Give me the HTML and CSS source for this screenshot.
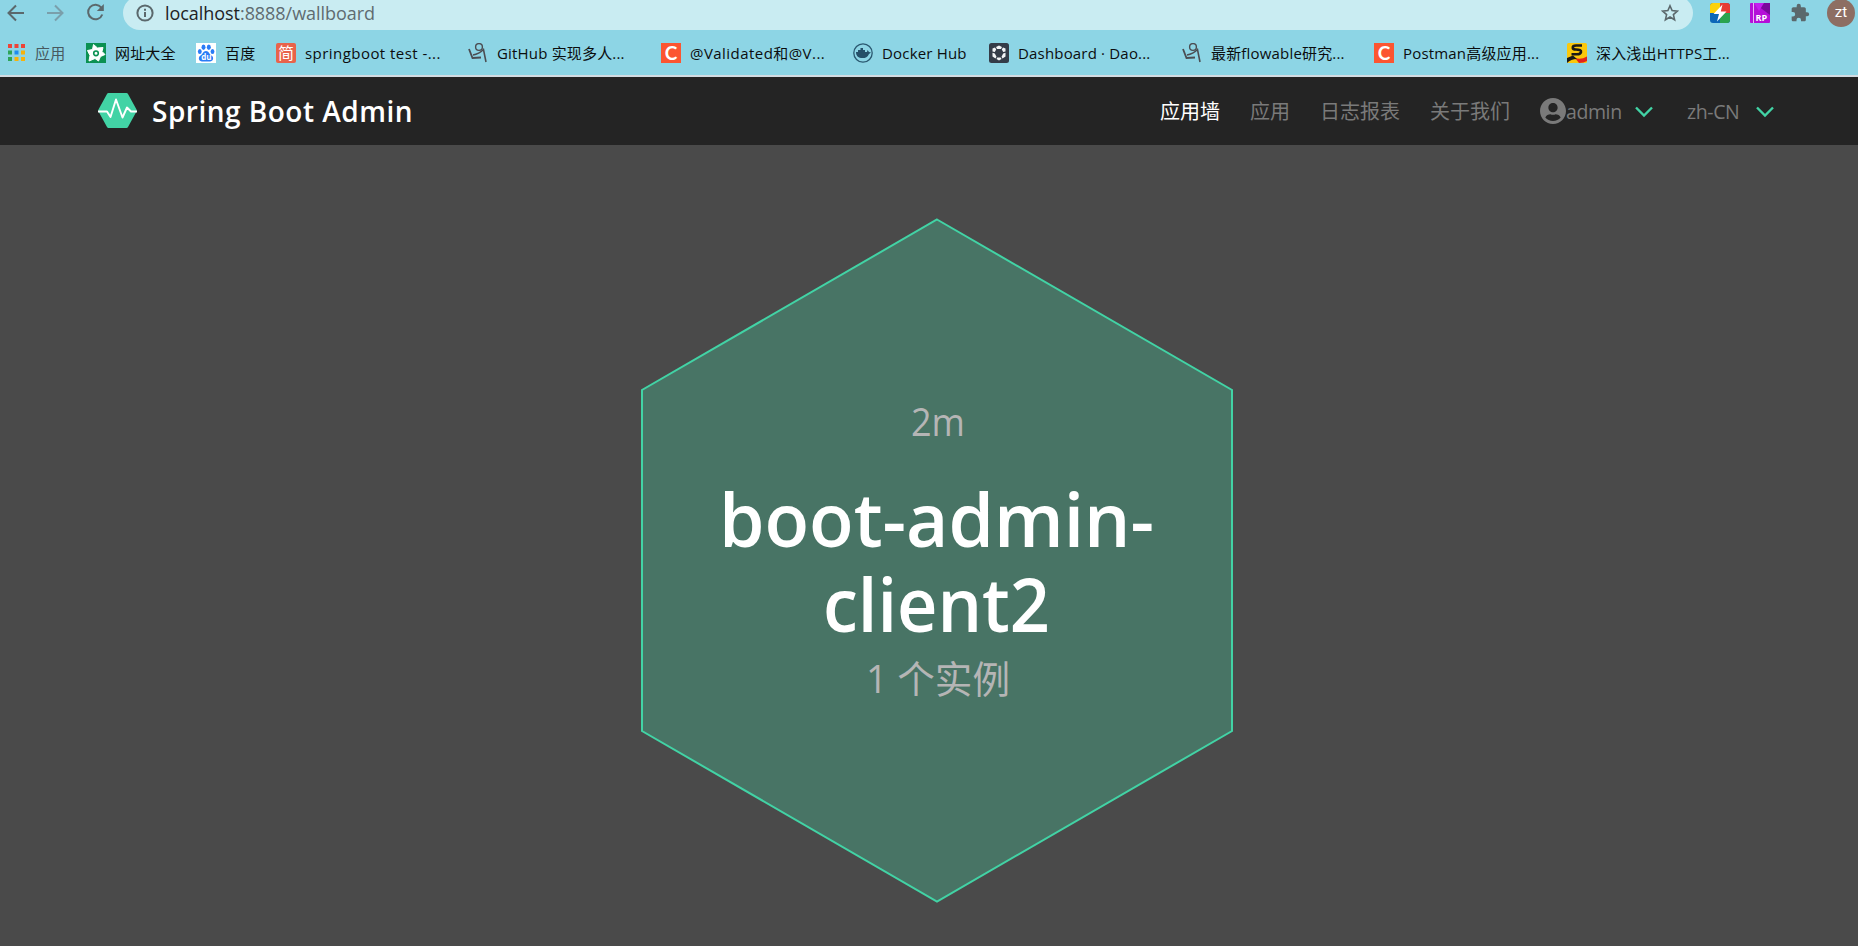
FILE: index.html
```
<!DOCTYPE html>
<html lang="zh-CN">
<head>
  <meta charset="UTF-8">
  <title>Spring Boot Admin</title>
  <link rel="stylesheet" href="styles.css">
</head>
<body>
  <div class="browser">
    <div class="toolbar">
      <div class="history">
        <svg class="back" width="18" height="18" viewBox="0 0 18 18"><path d="M17 9H2M9 1.500L1.500 9L9 16.500"/></svg>
        <svg class="forward" width="18" height="18" viewBox="0 0 18 18"><path d="M0 9H15M8 1.500L15.500 9L8 16.500"/></svg>
        <svg class="reload" width="19" height="19" viewBox="0 0 19 19"><path d="M15.300 4.600A7.300 7.300 0 1 0 16.300 11.500"/><path class="solid" d="M17.800 1V8H10.800Z"/></svg>
      </div>
      <div class="address">
        <svg class="info" width="18" height="18" viewBox="0 0 18 18"><circle cx="9" cy="9" r="7.600"/><path d="M9 8V13M9 4.800V6.800"/></svg>
        <span class="url"><b>localhost</b>:8888/wallboard</span>
        <svg class="star" width="18" height="18" viewBox="0 0 18 18"><path d="M9 1.800L11.100 6.600L16.300 7.100L12.400 10.600L13.600 15.800L9 13L4.400 15.800L5.600 10.600L1.700 7.100L6.900 6.600Z"/></svg>
      </div>
      <div class="extensions">
        <svg width="20" height="20" viewBox="0 0 20 20"><rect width="20" height="20" rx="3" fill="#0b67b8"/><path d="M3 0H10V10H0V3Q0 0 3 0Z" fill="#fbd20b"/><path d="M10 0H17Q20 0 20 3V10H10Z" fill="#e63b33"/><path d="M10 10H20V17Q20 20 17 20H10Z" fill="#2aa44f"/><path d="M12.500 1.500L3.500 11H9L7 18.500L16.500 8.500H10.800Z" fill="#fff"/></svg>
        <svg width="20" height="20" viewBox="0 0 20 20"><rect width="20" height="20" rx="1" fill="#b50fd8"/><path d="M4 0H20V12Z" fill="#7a0a9c"/><path d="M4 0H14L9 8Z" fill="#c51ff0"/><path d="M3.500 0V20" stroke="#e9b5f5"/><text class="rp" x="5.500" y="18">RP</text></svg>
        <svg class="puzzle" width="20" height="20" viewBox="0 0 24 24"><path d="M20.500 11H19V7c0-1.100-.9-2-2-2h-4V3.500a2.500 2.500 0 0 0-5 0V5H4c-1.100 0-2 .9-2 2v3.800h1.500a2.700 2.700 0 0 1 0 5.400H2V20c0 1.100.9 2 2 2h3.800v-1.500a2.700 2.700 0 0 1 5.400 0V22H17c1.100 0 2-.9 2-2v-4h1.500a2.500 2.500 0 0 0 0-5z"/></svg>
        <span class="avatar">zt</span>
      </div>
    </div>

    <div class="bookmarks">
      <div class="bookmark apps">
        <svg width="18" height="18" viewBox="0 0 18 18"><path fill="#ee4438" d="M0 0h4v4H0zM6.500 0h4v4h-4zM13 0h4v4h-4z"/><path fill="#2ea458" d="M0 6.500h4v4H0zM0 13h4v4H0z"/><path fill="#1f8cf0" d="M6.500 6.500h4v4h-4z"/><path fill="#f6b20c" d="M13 6.500h4v4h-4zM6.500 13h4v4h-4zM13 13h4v4h-4z"/></svg>
        <span>应用</span>
      </div>
      <div class="bookmark">
        <svg width="20" height="20" viewBox="0 0 20 20"><rect width="20" height="20" fill="#0b9152"/><path fill="#fff" stroke="#fff" stroke-linejoin="round" d="M7.500 1.500L11.500 5L17 4.500L16 8.500L19 11.500L14.500 13.500L12.500 18L9 15.500L3 18L4 12.500L1.500 7.500L6.500 6.500Z"/><circle cx="10" cy="10.300" r="2.300" fill="none" stroke="#0b9152" stroke-width="1.600"/></svg>
        <span>网址大全</span>
      </div>
      <div class="bookmark">
        <svg width="20" height="20" viewBox="0 0 20 20"><rect width="20" height="20" fill="#fff"/><g fill="#2a7cf6"><ellipse cx="7.500" cy="4.200" rx="2" ry="2.700"/><ellipse cx="12.800" cy="4.200" rx="2" ry="2.700"/><ellipse cx="3.800" cy="8.500" rx="1.900" ry="2.500"/><ellipse cx="16.500" cy="8.500" rx="1.900" ry="2.500"/><path d="M10 8C13 8 13 11 15.500 12.500C18.500 14.500 17 18.500 14 18.500H6C3 18.500 1.500 14.500 4.500 12.500C7 11 7 8 10 8Z"/></g><text class="du" x="5.200" y="17.200">du</text></svg>
        <span>百度</span>
      </div>
      <div class="bookmark spaced">
        <i class="tile jian">简</i>
        <span>springboot test -...</span>
      </div>
      <div class="bookmark">
        <svg width="20" height="20" viewBox="0 0 20 20" fill="none" stroke="#4b4d52"><circle cx="11" cy="4" r="3.400" stroke-width="1.400"/><path stroke-width="1.800" d="M1 6L4.500 15L13 14.500"/><path stroke-width="1.600" d="M5 12Q11 11 15.500 6.500L18 19"/></svg>
        <span>GitHub 实现多人...</span>
      </div>
      <div class="bookmark spaced">
        <i class="tile csdn">C</i>
        <span>@Validated和@V...</span>
      </div>
      <div class="bookmark">
        <svg width="20" height="20" viewBox="0 0 20 20"><circle cx="10" cy="10" r="9.200" fill="none" stroke="#2a5870" stroke-width="1.300"/><path fill="#254f68" d="M3 9H5V7H7.500V5H10V7H12V9H14L14.500 7L16 9L18 9.500L16 11C14.500 14.500 11.500 15.500 8 15C4.500 14.500 3 12 3 9Z"/></svg>
        <span>Docker Hub</span>
      </div>
      <div class="bookmark">
        <svg width="20" height="20" viewBox="0 0 20 20"><rect width="20" height="20" rx="2.500" fill="#343c48"/><path fill="#f3f5f7" d="M7 4L10 2.500L13 4L12 6H8ZM3.500 5.500L6 4.500L7.200 6.500L5.800 9L3.500 8.500ZM16.500 5.500L14 4.500L12.800 6.500L14.200 9L16.500 8.500ZM3.500 9.800L5.800 10.500L7.500 13.800L6.500 15.500L3.500 13.500ZM16.500 9.800L14.200 10.500L12.500 13.800L13.500 15.500L16.500 13.500ZM8.300 14.500H11.700L12.500 16L10 17.500L7.500 16Z"/></svg>
        <span>Dashboard · Dao...</span>
      </div>
      <div class="bookmark">
        <svg width="20" height="20" viewBox="0 0 20 20" fill="none" stroke="#4b4d52"><circle cx="11" cy="4" r="3.400" stroke-width="1.400"/><path stroke-width="1.800" d="M1 6L4.500 15L13 14.500"/><path stroke-width="1.600" d="M5 12Q11 11 15.500 6.500L18 19"/></svg>
        <span>最新flowable研究...</span>
      </div>
      <div class="bookmark">
        <i class="tile csdn">C</i>
        <span>Postman高级应用...</span>
      </div>
      <div class="bookmark">
        <svg width="20" height="20" viewBox="0 0 20 20"><rect width="20" height="20" rx="1.500" fill="#fbc80c"/><path fill="none" stroke="#1c1a17" stroke-width="2.600" d="M15 2.500H9Q5.500 2.500 5.800 5Q6 6.500 9 6.500Q14.500 6.500 14 9Q13.500 11.300 10 11.300H4.500"/><path fill="#e3231b" d="M8 15Q14 17 20 13.500V18Q17 20 12 20Z"/><path fill="#1c1a17" d="M0 20V15L6 12.500L10 16Q4 16 0 20Z"/></svg>
        <span>深入浅出HTTPS工...</span>
      </div>
    </div>
  </div>

  <nav class="navbar">
    <div class="brand">
      <svg width="39" height="35" viewBox="0 0 39 35"><path fill="#42d3a5" d="M10.500 0H28.500Q29.500 0 30 1L38.500 16.500Q39 17.500 38.500 18.500L30 34Q29.500 35 28.500 35H10.500Q9.500 35 9 34L.5 18.500Q0 17.500 .5 16.500L9 1Q9.500 0 10.500 0Z"/><path fill="none" stroke="#fff" stroke-width="1.900" stroke-linejoin="round" d="M0 18.500H9L12.500 24L18 6.500L24.500 24.500L29 14.500L33 18.500H39"/></svg>
      <span class="brand-name">Spring Boot Admin</span>
    </div>
    <div class="menu">
      <a class="menu-item active">应用墙</a>
      <a class="menu-item">应用</a>
      <a class="menu-item">日志报表</a>
      <a class="menu-item">关于我们</a>
      <a class="menu-item user">
        <svg width="26" height="26" viewBox="0 0 496 496"><path fill="#7a7a7a" d="M248 0C111 0 0 111 0 248s111 248 248 248 248-111 248-248S385 0 248 0zm0 96c48.600 0 88 39.400 88 88s-39.400 88-88 88-88-39.400-88-88 39.400-88 88-88zm0 344c-58.700 0-111.300-26.600-146.500-68.200 18.800-35.400 55.600-59.800 98.500-59.800 2.400 0 4.800.4 7.100 1.100 13 4.200 26.600 6.900 40.900 6.900s28-2.700 40.900-6.900c2.300-.7 4.700-1.100 7.100-1.100 42.900 0 79.700 24.400 98.500 59.800C359.300 413.400 306.700 440 248 440z"/></svg>
        <span class="label">admin</span>
        <svg class="chevron" width="18" height="12" viewBox="0 0 18 12"><path d="M1 1.500L9 9.500L17 1.500"/></svg>
      </a>
      <a class="menu-item lang">
        <span class="label">zh-CN</span>
        <svg class="chevron" width="18" height="12" viewBox="0 0 18 12"><path d="M1 1.500L9 9.500L17 1.500"/></svg>
      </a>
    </div>
  </nav>

  <main class="wallboard">
    <svg class="hex" width="594" height="686" viewBox="0 0 594 686">
      <path class="hex-shape" d="M297 1.500L592 172V513L297 683.500L2 513V172Z"/>
      <text class="hex-meta" x="271" y="218" textLength="54" lengthAdjust="spacingAndGlyphs">2m</text>
      <text class="hex-name" x="79" y="329" textLength="435" lengthAdjust="spacingAndGlyphs">boot-admin-</text>
      <text class="hex-name" x="183" y="414" textLength="227" lengthAdjust="spacingAndGlyphs">client2</text>
      <text class="hex-meta" x="226" y="475" textLength="144" lengthAdjust="spacingAndGlyphs">1 个实例</text>
    </svg>
  </main>
</body>
</html>
```
FILE: styles.css
```
body {
  margin: 0;
  height: 946px;
  overflow: hidden;
  display: flex;
  flex-direction: column;
  font-family: "Open Sans", "Noto Sans CJK SC", sans-serif;
  background-color: #4a4a4a;
}

/* browser bars */
.browser {
  height: 75px;
  background-color: #8dd5e5;
  border-bottom: 2px solid #d3dce2;
}

.toolbar {
  display: flex;
  height: 30px;
}

.history {
  display: flex;
  align-items: center;
  gap: 22px;
  width: 116px;
  height: 25px;
  padding-left: 7px;
}

.history path,
.info path,
.info circle,
.star path {
  fill: none;
  stroke: #5b686c;
  stroke-width: 2;
}

.history .forward path {
  stroke: #7a9fab;
}

.history .reload {
  margin-left: -1px;
}

.history .solid {
  fill: #5b686c;
  stroke: none;
}

.address {
  display: flex;
  align-items: center;
  box-sizing: border-box;
  width: 1570px;
  height: 34px;
  margin-top: -4px;
  padding: 0 14px 1px 13px;
  border-radius: 17px;
  background-color: #c9ecf2;
}

.url {
  flex: 1;
  margin-left: 11px;
  font-size: 18px;
  letter-spacing: -0.05px;
  line-height: 24px;
  color: #5f6b70;
}

.url b {
  font-weight: normal;
  color: #1d2224;
}

.star path {
  stroke-width: 1.6;
}

.extensions {
  display: flex;
  align-items: center;
  gap: 20px;
  height: 26px;
  margin-left: 17px;
}

.rp {
  font-size: 9px;
  font-weight: bold;
  fill: #fff;
}

.puzzle {
  fill: #5b686c;
}

.avatar {
  flex: none;
  width: 28px;
  height: 28px;
  margin-left: -3px;
  border-radius: 50%;
  background-color: #8d6e63;
  color: #fff;
  font: 15px/27px Roboto, sans-serif;
  text-align: center;
}

.bookmarks {
  display: grid;
  grid-template-columns: 78px 110px 80px 192px 193px 192px 136px 193px 192px 193px 180px;
  align-items: center;
  height: 45px;
  padding-left: 8px;
}

.bookmark {
  display: flex;
  align-items: center;
  gap: 10px;
  font-size: 15px;
  letter-spacing: 0.18px;
  line-height: 20px;
  color: #0b0d0e;
  white-space: nowrap;
}

.bookmark span {
  margin-left: -1px;
}

.spaced {
  letter-spacing: 0.45px;
}

.apps {
  color: #47595f;
}

.tile {
  width: 20px;
  height: 20px;
  font-style: normal;
  line-height: 20px;
  letter-spacing: 0;
  text-align: center;
  color: #fff;
}

.jian {
  border-radius: 2px;
  background-color: #e8634b;
  font-size: 16px;
}

.csdn {
  background-color: #fc5531;
  font-family: Lato, sans-serif;
  font-size: 19px;
  font-weight: bold;
}

.du {
  font-size: 8px;
  font-weight: bold;
  letter-spacing: 0;
  fill: #fff;
}

/* navbar */
.navbar {
  display: flex;
  justify-content: space-between;
  align-items: center;
  height: 68px;
  padding: 0 84px 0 98px;
  background-color: #242424;
}

.brand {
  display: flex;
  align-items: center;
  gap: 15px;
}

.brand svg {
  margin-bottom: 2px;
}

.brand-name {
  font-size: 28px;
  font-weight: 600;
  letter-spacing: 0.5px;
  line-height: 40px;
  color: #fff;
}

.menu {
  display: flex;
  align-items: center;
  gap: 30px;
}

.menu-item {
  display: flex;
  align-items: center;
  padding-top: 2px;
  font-size: 20px;
  line-height: 30px;
  color: #7a7a7a;
  white-space: nowrap;
}

.menu-item.active {
  color: #fff;
}

.user svg:first-child {
  margin-bottom: 3px;
}

.label {
  display: block;
  width: 55px;
  font-size: 19.5px;
  letter-spacing: -0.4px;
}

.chevron {
  margin-left: 14px;
}

.chevron path {
  fill: none;
  stroke: #42d3a5;
  stroke-width: 2.4;
}

.lang {
  margin-left: 4px;
}

/* wallboard */
.wallboard {
  display: flex;
  justify-content: center;
  padding: 73px 0 0 15px;
}

.hex-shape {
  fill: #487465;
  stroke: #42d3a5;
  stroke-width: 2;
}

.hex-meta {
  font-size: 38px;
  fill: #b5b5b5;
}

.hex-name {
  font-size: 75px;
  font-weight: 600;
  fill: #fff;
}
```
